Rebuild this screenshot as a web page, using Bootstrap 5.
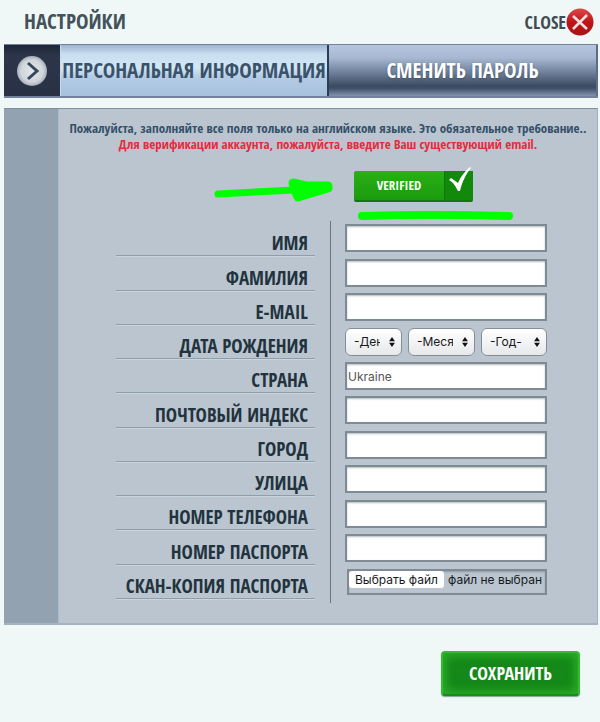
<!DOCTYPE html>
<html lang="ru">
<head>
<meta charset="utf-8">
<meta name="viewport" content="width=device-width, initial-scale=1">
<title>Настройки</title>
<link href="https://cdn.jsdelivr.net/npm/bootstrap@5.3.0/dist/css/bootstrap.min.css" rel="stylesheet">
<style>
body{background:#eff8f7;color:#22333e;font-family:"Open Sans Condensed","Liberation Sans Narrow","Liberation Sans",sans-serif;font-weight:700;line-height:1.2}
.page-head{height:44px;padding-left:20px;padding-right:6px}
.page-head h1{font-size:21px;font-weight:700;color:#45525a}
.close-btn{font-size:18px;font-weight:700;color:#404b53}
.page-body{margin-right:2px}
.tab-bar{height:54px;border-top:1px solid #71829a;border-bottom:2px solid #71829a}
.tab-mark{flex:0 0 56px;background:linear-gradient(#1e2738,#2c3549 20%,#293145)}
.tab-btn{font-size:21px;font-weight:700;border:0;padding:0;white-space:nowrap}
.tab-on{flex:0 1 269px;color:#3b526b;background:linear-gradient(#9fb4d0,#c9dff0 18%,#d2e7f5 45%,#b4cce4 62%,#a7c0dc);border-left:1px solid #c7dcec;border-right:2px solid #2b3c55}
.tab-off{color:#fff;background:linear-gradient(#b7c6df,#a8b8d2 25%,#6c7e98 55%,#3c4b60 80%,#40506a 85%,#8193ad);border-right:2px solid #5c6d87;text-shadow:0 1px 2px #40506a}
.panel-box{margin-top:10px;background:#bac5cf;border-top:1px solid #7e909f;border-right:1px solid #a0b0bf;border-bottom:2px solid #a3b3c1}
.side-strip{flex:0 0 55px;background:#92a2b0;border-right:1px solid #a9bac8}
.notice{font-size:13px;line-height:16px;padding-top:11px;white-space:nowrap}
.notice-main{color:#355069}
.notice-alert{color:#e52c3c}
.verify-row{height:69px;padding-left:295px;padding-top:19px}
.verified-btn{width:119px;height:31px;border:0;border-radius:2px;padding:0;color:#fff;font-size:13px;font-weight:700;background:linear-gradient(#2bb016,#1a9b0d);border-bottom:2px solid #17750f}
.verified-tick{width:29px;height:29px;background:#13890b;border-left:1px solid #0c7807}
.ink{left:206px;top:67px;pointer-events:none}
.fields{padding-left:57px;padding-right:50px}
.labels{flex:1 1 199px;min-height:377px;margin-top:1px}
.labels label{font-size:19px;line-height:24px;padding-right:7px;border-bottom:1px solid #8d9eac;box-shadow:0 1px #c9d4dd;white-space:nowrap}
.rule{flex:0 0 1px;margin:0 14px 0 15px;background:#64788a;height:382px}
.inputs{flex:0 0 202px;min-height:377px}
.inputs,.inputs select,.inputs input{font-family:Inter,"Liberation Sans",sans-serif;font-weight:400;font-size:12px;color:#171a1c}
.inputs input.form-control{height:28px;padding:0 1px;border:2px solid #7e8a94;border-radius:0;background:#fff;box-shadow:inset 0 1px 2px #b5bbc0;color:#555}
.inputs .form-select{height:28px;padding:0 21px 0 8px;border:1px solid #848e96;border-radius:6px;background:#f4f5f6 linear-gradient(#fff,#e6e8ea)}
.pick{min-width:0}
.pick svg{right:7px;top:9px;pointer-events:none}
.pick-day{width:57px}.pick-month{width:67px}.pick-year{width:66px}
.file-box{height:26px;margin-left:2px;border:2px solid #7e8a94;box-shadow:inset 0 1px 2px #8d99a4;white-space:nowrap}
.file-btn{background:#fff;border-radius:3px;line-height:17px;padding:0 6px;font-size:12px}
.file-state{padding-left:4px;line-height:18px;font-size:12px}
.panel-end{height:20px}
.page-foot{padding:26px 20px 26px}
.save-btn{width:139px;height:45px;color:#fff;font-size:18px;font-weight:700;border:2px solid #37b935;border-bottom-color:#168d1e;border-radius:4px;background:#148818;box-shadow:inset 0 0 9px 3px #2dac28,0 1px 1px #7aa78a}
</style>
</head>
<body>
<main class="container-fluid ps-1 pe-0">
<header class="page-head d-flex align-items-center justify-content-between">
<h1 class="m-0">НАСТРОЙКИ</h1>
<button type="button" class="close-btn btn p-0 border-0 d-flex align-items-center">CLOSE
<svg width="28" height="28" viewBox="0 0 28 28" aria-hidden="true"><defs><linearGradient id="r" x1="0" y1="0" x2="0" y2="1"><stop offset="0" stop-color="#df4a4a"/><stop offset=".5" stop-color="#bd1519"/><stop offset="1" stop-color="#ab1215"/></linearGradient></defs><circle cx="14" cy="14" r="13.5" fill="url(#r)"/><path d="M7 8l14 13M21 7L7 21" stroke="#f9dede" stroke-width="2.6"/></svg></button>
</header>
<div class="page-body">
<nav class="tab-bar d-flex">
<div class="tab-mark d-flex align-items-center justify-content-center"><svg width="32" height="32" viewBox="0 0 32 32" aria-hidden="true"><defs><radialGradient id="g"><stop offset="0" stop-color="#e4e8eb"/><stop offset=".75" stop-color="#d0d5da"/><stop offset="1" stop-color="#a4adb7"/></radialGradient></defs><circle cx="16" cy="16" r="15" fill="url(#g)"/><path d="M12 8l9 8-9 8" fill="none" stroke="#34495c" stroke-width="3"/></svg></div>
<button type="button" class="tab-btn tab-on">ПЕРСОНАЛЬНАЯ ИНФОРМАЦИЯ</button>
<button type="button" class="tab-btn tab-off flex-fill">СМЕНИТЬ ПАРОЛЬ</button>
</nav>
<section class="panel-box d-flex position-relative">
<div class="side-strip"></div>
<div class="flex-fill">
<div class="notice text-center"><div class="notice-main">Пожалуйста, заполняйте все поля только на английском языке. Это обязательное требование..</div><div class="notice-alert">Для верификации аккаунта, пожалуйста, введите Ваш существующий email.</div></div>
<div class="verify-row"><button type="button" class="verified-btn d-flex align-items-center"><span class="flex-fill">VERIFIED</span><span class="verified-tick d-block"><svg class="d-block" width="28" height="28" viewBox="0 0 28 28" overflow="visible" aria-hidden="true"><path d="M4 9L6 7l7 5C16 5 20 0 25-4l1 1C21 3 17 11 15 20h-2C11 16 8 11 4 9z" fill="#fff"/></svg></span></button></div>
<form id="profile" class="fields d-flex align-items-start">
<div class="labels d-flex flex-column text-end">
<label class="flex-fill d-flex align-items-end justify-content-end" for="f1">ИМЯ</label>
<label class="flex-fill d-flex align-items-end justify-content-end" for="f2">ФАМИЛИЯ</label>
<label class="flex-fill d-flex align-items-end justify-content-end" for="f3">E-MAIL</label>
<label class="flex-fill d-flex align-items-end justify-content-end" for="f4">ДАТА РОЖДЕНИЯ</label>
<label class="flex-fill d-flex align-items-end justify-content-end" for="f5">СТРАНА</label>
<label class="flex-fill d-flex align-items-end justify-content-end" for="f6">ПОЧТОВЫЙ ИНДЕКС</label>
<label class="flex-fill d-flex align-items-end justify-content-end" for="f7">ГОРОД</label>
<label class="flex-fill d-flex align-items-end justify-content-end" for="f8">УЛИЦА</label>
<label class="flex-fill d-flex align-items-end justify-content-end" for="f9">НОМЕР ТЕЛЕФОНА</label>
<label class="flex-fill d-flex align-items-end justify-content-end" for="f10">НОМЕР ПАСПОРТА</label>
<label class="flex-fill d-flex align-items-end justify-content-end" for="f11">СКАН-КОПИЯ ПАСПОРТА</label>
</div>
<div class="rule"></div>
<div class="inputs d-flex flex-column mt-0 pt-0">
<div class="flex-fill d-flex align-items-center"><input id="f1" class="form-control" type="text"></div>
<div class="flex-fill d-flex align-items-center"><input id="f2" class="form-control" type="text"></div>
<div class="flex-fill d-flex align-items-center"><input id="f3" class="form-control" type="email"></div>
<div class="flex-fill d-flex align-items-center justify-content-between">
<div class="pick pick-day position-relative"><select id="f4" class="form-select"><option>-День-</option></select><svg class="position-absolute" width="6" height="10" viewBox="0 0 7 12" aria-hidden="true"><path d="M3.500 0L7 5H0zM3.500 12L0 7h7z" fill="#111"/></svg></div>
<div class="pick pick-month position-relative"><select class="form-select" aria-label="Месяц"><option>-Месяц-</option></select><svg class="position-absolute" width="6" height="10" viewBox="0 0 7 12" aria-hidden="true"><path d="M3.500 0L7 5H0zM3.500 12L0 7h7z" fill="#111"/></svg></div>
<div class="pick pick-year position-relative"><select class="form-select" aria-label="Год"><option>-Год-</option></select><svg class="position-absolute" width="6" height="10" viewBox="0 0 7 12" aria-hidden="true"><path d="M3.500 0L7 5H0zM3.500 12L0 7h7z" fill="#111"/></svg></div>
</div>
<div class="flex-fill d-flex align-items-center"><input id="f5" class="form-control" type="text" value="Ukraine"></div>
<div class="flex-fill d-flex align-items-center"><input id="f6" class="form-control" type="text"></div>
<div class="flex-fill d-flex align-items-center"><input id="f7" class="form-control" type="text"></div>
<div class="flex-fill d-flex align-items-center"><input id="f8" class="form-control" type="text"></div>
<div class="flex-fill d-flex align-items-center"><input id="f9" class="form-control" type="tel"></div>
<div class="flex-fill d-flex align-items-center"><input id="f10" class="form-control" type="text"></div>
<div class="flex-fill d-flex align-items-center"><label class="file-box position-relative flex-fill d-flex align-items-start"><input id="f11" class="visually-hidden" type="file"><span class="file-btn">Выбрать файл</span><span class="file-state">файл не выбран</span></label></div>
</div>
</form>
<div class="panel-end"></div>
</div>
<svg class="ink position-absolute" width="310" height="50" viewBox="210 176 310 50" aria-hidden="true"><path d="M218 194L294 190" fill="none" stroke="#0f0" stroke-width="7" stroke-linecap="round"/><path d="M293 183L306 186 328 186 328 188 298 197 295 190z" fill="#0f0" stroke="#0f0" stroke-width="9" stroke-linejoin="round"/><path d="M362 216Q430 214 509 216" fill="none" stroke="#0f0" stroke-width="8" stroke-linecap="round"/></svg>
</section>
</div>
<footer class="page-foot text-end"><button type="submit" form="profile" class="save-btn btn p-0">СОХРАНИТЬ</button></footer>
</main>
<script src="https://cdn.jsdelivr.net/npm/bootstrap@5.3.0/dist/js/bootstrap.bundle.min.js"></script>
</body>
</html>
